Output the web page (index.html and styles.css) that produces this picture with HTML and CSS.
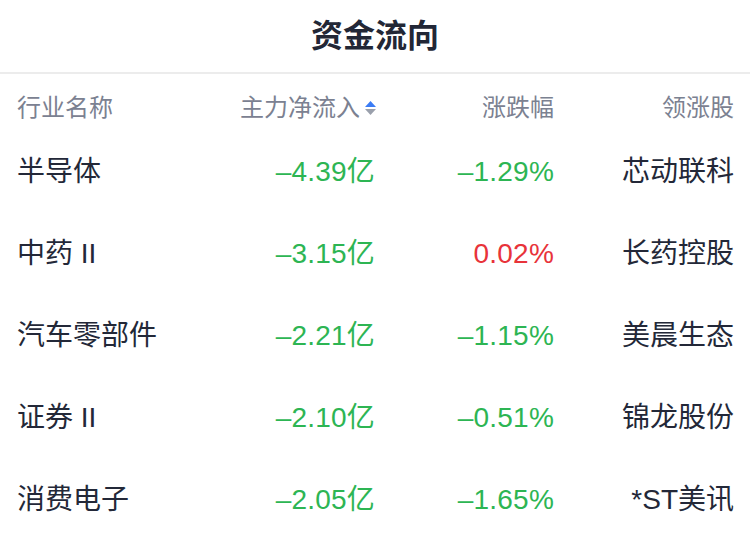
FILE: index.html
```html
<!DOCTYPE html>
<html lang="zh-CN">
<head>
<meta charset="utf-8">
<title>资金流向</title>
<link rel="stylesheet" href="styles.css">
</head>
<body>
<div class="page">
  <header class="title-bar"><h1 class="title">资金流向</h1></header>
  <div class="table">
    <div class="row head">
      <div class="cell left">行业名称</div>
      <div class="cell right sortable">主力净流入<svg class="sort" width="13" height="16" viewBox="0 0 13 16"><path d="M6.5 1 L12 7 L1 7 Z" fill="#3b7cf5"/><path d="M1 9 L12 9 L6.5 15 Z" fill="#9aa0ac"/></svg></div>
      <div class="cell right">涨跌幅</div>
      <div class="cell right">领涨股</div>
    </div>
    <div class="row">
      <div class="cell left name">半导体</div>
      <div class="cell right num down">–4.39亿</div>
      <div class="cell right num down">–1.29%</div>
      <div class="cell right name">芯动联科</div>
    </div>
    <div class="row">
      <div class="cell left name">中药 II</div>
      <div class="cell right num down">–3.15亿</div>
      <div class="cell right num up">0.02%</div>
      <div class="cell right name">长药控股</div>
    </div>
    <div class="row">
      <div class="cell left name">汽车零部件</div>
      <div class="cell right num down">–2.21亿</div>
      <div class="cell right num down">–1.15%</div>
      <div class="cell right name">美晨生态</div>
    </div>
    <div class="row">
      <div class="cell left name">证券 II</div>
      <div class="cell right num down">–2.10亿</div>
      <div class="cell right num down">–0.51%</div>
      <div class="cell right name">锦龙股份</div>
    </div>
    <div class="row">
      <div class="cell left name">消费电子</div>
      <div class="cell right num down">–2.05亿</div>
      <div class="cell right num down">–1.65%</div>
      <div class="cell right name">*ST美讯</div>
    </div>
  </div>
</div>
</body>
</html>
```

FILE: styles.css
```css
* { box-sizing: border-box; }
html, body { margin: 0; padding: 0; background: #ffffff; }
body {
  font-family: "Liberation Sans", "Noto Sans CJK SC", sans-serif;
  color: #232838;
  width: 750px;
  height: 548px;
  overflow: hidden;
}
.title-bar {
  height: 74px;
  border-bottom: 2px solid #ececec;
  display: flex;
  align-items: center;
  justify-content: center;
}
.title {
  margin: 0;
  font-size: 32px;
  font-weight: 700;
  color: #222736;
  line-height: 1;
}
.table { padding: 0 16px 0 17px; }
.row {
  display: grid;
  grid-template-columns: 180px 178px 179px 180px;
  height: 82px;
  align-items: center;
}
.row.head {
  height: 57px;
  align-items: start;
  padding-top: 19px;
}
.head .cell {
  font-size: 24px;
  line-height: 30px;
  color: #7b8191;
}
.cell.left { text-align: left; }
.cell.right { text-align: right; }
.sortable {
  display: flex;
  justify-content: flex-end;
  align-items: center;
  gap: 4px;
}
.sort { display: block; margin-right: -2px; }
.name {
  font-size: 28px;
  line-height: 34px;
  color: #232838;
}
.num {
  font-size: 28px;
  line-height: 34px;
  letter-spacing: 0.2px;
}
.down { color: #2db553; }
.up { color: #e8333a; }
```
